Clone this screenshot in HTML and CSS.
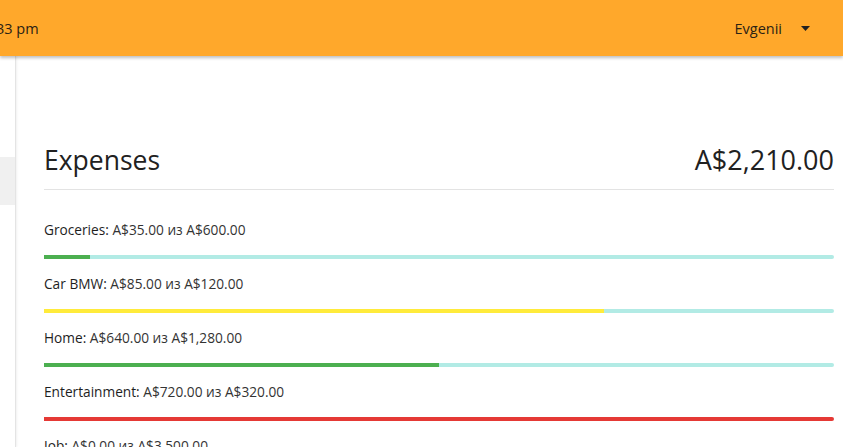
FILE: index.html
```html
<!DOCTYPE html>
<html>
<head>
<meta charset="utf-8">
<link rel="stylesheet" href="styles.css">
</head>
<body>
<header class="topbar">
  <div class="clock">33 pm</div>
  <div class="user">
    <span class="user-name">Evgenii</span>
    <svg class="caret" width="9" height="5" viewBox="0 0 9 5"><path d="M0 0h9L4.5 5z" fill="#212121"/></svg>
  </div>
</header>
<div class="layout">
  <aside class="sidebar">
    <div class="side-item active"></div>
  </aside>
  <main class="main">
    <section class="card">
      <div class="card-head">
        <h1 class="title">Expenses</h1>
        <div class="total">A$2,210.00</div>
      </div>
      <div class="rows">
        <div class="row">
          <div class="label"><span class="cat">Groceries:</span> A$35.00 из A$600.00</div>
          <div class="bar"><div class="fill green" style="width:5.83%"></div></div>
        </div>
        <div class="row">
          <div class="label"><span class="cat">Car BMW:</span> A$85.00 из A$120.00</div>
          <div class="bar"><div class="fill yellow" style="width:70.83%"></div></div>
        </div>
        <div class="row">
          <div class="label"><span class="cat">Home:</span> A$640.00 из A$1,280.00</div>
          <div class="bar"><div class="fill green" style="width:50%"></div></div>
        </div>
        <div class="row">
          <div class="label"><span class="cat">Entertainment:</span> A$720.00 из A$320.00</div>
          <div class="bar"><div class="fill red" style="width:100%"></div></div>
        </div>
        <div class="row">
          <div class="label"><span class="cat">Job:</span> A$0.00 из A$3,500.00</div>
          <div class="bar"><div class="fill green" style="width:0%"></div></div>
        </div>
      </div>
    </section>
  </main>
</div>
</body>
</html>
```

FILE: styles.css
```css
* { box-sizing: border-box; }
html, body { margin: 0; padding: 0; }
body {
  width: 843px;
  height: 447px;
  overflow: hidden;
  font-family: "Open Sans", "Noto Sans", sans-serif;
  color: #212121;
  background: #fff;
}
.topbar {
  position: relative;
  z-index: 2;
  height: 56px;
  background: #ffa82b;
  display: flex;
  align-items: center;
  justify-content: space-between;
  box-shadow: 0 2px 3px rgba(0,0,0,0.25);
  font-size: 14.5px;
}
.clock { margin-left: -4px; color: #2a2214; }
.user {
  display: flex;
  align-items: center;
  gap: 19px;
  margin-right: 33px;
  color: #2a2214;
}
.caret { display: block; }
.layout {
  display: flex;
  height: 391px;
}
.sidebar {
  width: 16px;
  flex: none;
  border-right: 1px solid #e4e4e4;
  box-shadow: 1px 0 2px rgba(0,0,0,0.06);
  padding-top: 101px;
}
.side-item.active {
  height: 48px;
  background: #f0f0f0;
}
.main {
  flex: 1;
  padding: 0 9px 0 28px;
}
.card { padding-top: 86px; }
.card-head {
  display: flex;
  justify-content: space-between;
  align-items: baseline;
  border-bottom: 1px solid #e3e3e3;
  padding-bottom: 11px;
}
.title, .total {
  margin: 0;
  font-weight: 400;
  font-size: 27px;
  line-height: 36px;
  color: #212121;
}
.title { font-size: 26.5px; }
.rows { padding-top: 30px; }
.row { height: 54px; }
.label {
  font-size: 13.7px;
  line-height: 20px;
  color: #333;
}
.cat { color: #1e1e1e; }
.bar {
  margin-top: 15px;
  height: 4px;
  background: #b2ebe5;
  border-radius: 0 2px 2px 0;
  overflow: hidden;
}
.fill { height: 100%; }
.green { background: #4caf50; }
.yellow { background: #ffeb3b; }
.red { background: #e53935; }
```
